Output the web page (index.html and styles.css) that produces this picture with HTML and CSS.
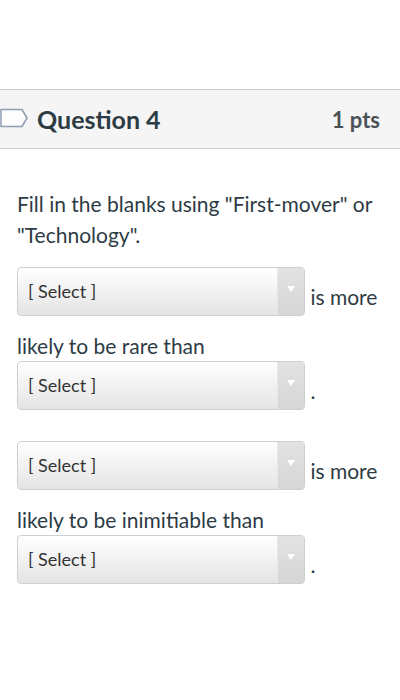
FILE: index.html
```html
<!DOCTYPE html>
<html>
<head>
<meta charset="utf-8">
<link rel="stylesheet" href="styles.css">
</head>
<body>
<div class="question">
  <div class="header">
    <div class="header-left">
      <svg class="flag" width="30" height="24" viewBox="0 0 30 24">
        <path d="M1 3.5 H22 L27 12 L22 20.5 H1 Z" fill="#fdfdfd" stroke="#8d9db2" stroke-width="1.5" stroke-linejoin="round"/>
      </svg>
      <span class="title">Question 4</span>
    </div>
    <span class="pts">1 pts</span>
  </div>
  <div class="content">
    <p class="intro">Fill in the blanks using "First-mover" or "Technology".</p>
    <p class="blank-para"><span class="sel"><span class="sel-label">[ Select ]</span><span class="sel-arrow"></span></span> is more likely to be rare than <span class="sel"><span class="sel-label">[ Select ]</span><span class="sel-arrow"></span></span> .</p>
    <p class="blank-para"><span class="sel"><span class="sel-label">[ Select ]</span><span class="sel-arrow"></span></span> is more likely to be inimitiable than <span class="sel"><span class="sel-label">[ Select ]</span><span class="sel-arrow"></span></span> .</p>
  </div>
</div>
</body>
</html>
```
FILE: styles.css
```css
html, body {
  margin: 0;
  padding: 0;
  background: #ffffff;
}
body {
  font-family: Lato, "Noto Sans", sans-serif;
  color: #2d3b45;
}
.question {
  margin-top: 89px;
}
.header {
  display: flex;
  align-items: center;
  justify-content: space-between;
  height: 58px;
  background: #f5f5f5;
  border-top: 1px solid #c7cdd1;
  border-bottom: 1px solid #c7cdd1;
  padding-right: 20px;
}
.header-left {
  display: flex;
  align-items: center;
}
.flag {
  display: block;
  margin-top: -2px;
}
.title {
  font-weight: 700;
  font-size: 25px;
  margin-left: 7px;
  color: #2d3b45;
}
.pts {
  font-weight: 700;
  font-size: 22px;
  color: #4b5257;
}
.content {
  padding: 0 17px;
  font-size: 21px;
  line-height: 31px;
  color: #2d3b45;
}
.intro {
  margin: 39px 0 0;
}
.blank-para {
  margin: 17px 0 0;
}
.sel {
  display: inline-block;
  position: relative;
  overflow: hidden;
  box-sizing: border-box;
  width: 288px;
  height: 49px;
  margin-bottom: 14px;
  vertical-align: -25px;
  border: 1px solid #cfcfcf;
  border-radius: 4px;
  background: linear-gradient(#ffffff, #e4e4e4);
}
.sel-label {
  display: block;
  font-size: 18px;
  line-height: 47px;
  padding-left: 10px;
  color: #333333;
}
.sel-arrow {
  position: absolute;
  top: 0;
  right: 0;
  width: 26px;
  height: 47px;
  background: linear-gradient(#e2e2e2, #d6d6d6);
  border-left: 1px solid #e8e8e8;
}
.sel-arrow::after {
  content: "";
  position: absolute;
  left: 9px;
  top: 18px;
  border-left: 4px solid transparent;
  border-right: 4px solid transparent;
  border-top: 6px solid #ffffff;
}
```
